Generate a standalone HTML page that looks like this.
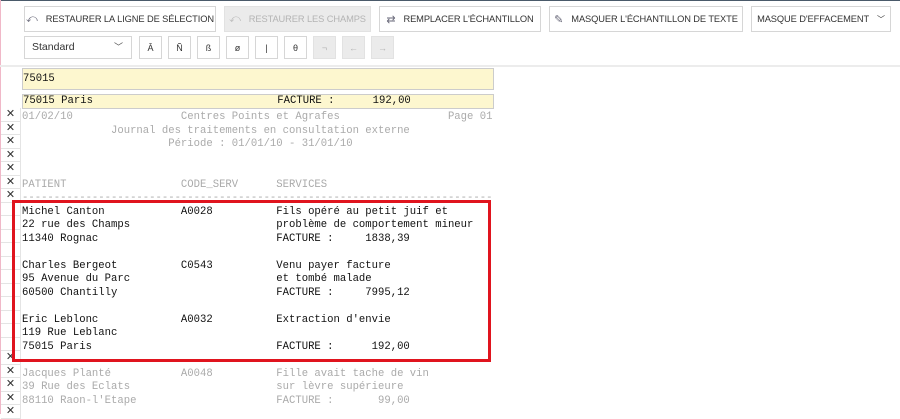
<!DOCTYPE html>
<html><head><meta charset="utf-8"><style>
*{box-sizing:border-box;margin:0;padding:0}
body{width:900px;height:414px;overflow:hidden;background:#fff;position:relative;font-family:"Liberation Sans",sans-serif}
.top{position:absolute;left:0;top:0;width:900px;height:1px;background:#4a5a6a}
.btn{position:absolute;top:6px;height:26px;border:1px solid #d6d6d6;background:#fff;font-size:9.3px;color:#333;display:flex;align-items:center;justify-content:center;gap:8px;letter-spacing:-0.1px}
.btn.dis{background:#ebebeb;color:#b4b4b4;border-color:#e2e2e2}
.ic{font-size:11px;color:#667}
.sb{position:absolute;top:36px;width:23px;height:23px;border:1px solid #d6d6d6;background:#fff;font-size:9px;color:#333;display:flex;align-items:center;justify-content:center}
.sb.dis{background:#ebebeb;color:#b4b4b4;border-color:#e2e2e2}
.sel{position:absolute;left:24px;top:36px;width:108px;height:23px;border:1px solid #d6d6d6;font-size:10.5px;color:#333;padding-left:7px;line-height:21px}
.sep{position:absolute;left:0;top:65px;width:900px;height:2px;background:#ececec}
.pink{position:absolute;left:0;top:0;width:1px;height:414px;background:#f0b8c8}
.gut{position:absolute;left:1px;width:20px;height:13.5px;border-bottom:1px solid #e4e4e4;border-right:1px solid #e4e4e4;font-size:11px;color:#333;text-align:center;line-height:13px}
.yb{position:absolute;left:22px;width:472px;background:#fdf7cf;border:1px solid #ccc;font-family:"Liberation Mono",monospace;font-size:10.6px;color:#111;padding-left:0;white-space:pre}
.ln{position:absolute;left:22px;font-family:"Liberation Mono",monospace;font-size:10.6px;white-space:pre;line-height:13.5px;color:#111}
.g{color:#aaa}
.red{position:absolute;left:12px;top:200px;width:479px;height:162px;border:3px solid #e0141e}
</style></head><body>
<div class="top"></div>
<div class="pink"></div>
<div class="btn" style="left:24px;width:192px"><span class="ic">⤺</span>RESTAURER LA LIGNE DE SÉLECTION</div>
<div class="btn dis" style="left:224px;width:147px"><span class="ic" style="color:#bbb">⤺</span>RESTAURER LES CHAMPS</div>
<div class="btn" style="left:379px;width:162px"><span class="ic">⇄</span>REMPLACER L'ÉCHANTILLON</div>
<div class="btn" style="left:549px;width:194px"><span class="ic">✎</span>MASQUER L'ÉCHANTILLON DE TEXTE</div>
<div class="btn" style="left:751px;width:140px">MASQUE D'EFFACEMENT <span style="font-size:8px">﹀</span></div>
<div class="sel">Standard<span style="position:absolute;right:8px;top:0;font-size:9px;color:#555">﹀</span></div>
<div class="sb" style="left:139px">Â</div>
<div class="sb" style="left:168px">Ñ</div>
<div class="sb" style="left:197px">ß</div>
<div class="sb" style="left:226px">ø</div>
<div class="sb" style="left:255px">|</div>
<div class="sb" style="left:284px">θ</div>
<div class="sb dis" style="left:313px">¬</div>
<div class="sb dis" style="left:342px">←</div>
<div class="sb dis" style="left:371px">→</div>
<div class="sep"></div>
<div class="yb" style="top:68px;height:22px;line-height:20px">75015</div>
<div class="yb" style="top:94px;height:15px;line-height:13px">75015 Paris                             FACTURE :      192,00</div>
<div class="gut" style="top:108px">✕</div><div class="gut" style="top:121.5px">✕</div><div class="gut" style="top:135px">✕</div><div class="gut" style="top:148.5px">✕</div><div class="gut" style="top:162px">✕</div><div class="gut" style="top:175.5px">✕</div><div class="gut" style="top:189px">✕</div>
<div class="gut" style="top:202.5px"></div><div class="gut" style="top:216px"></div><div class="gut" style="top:229.5px"></div><div class="gut" style="top:243px"></div><div class="gut" style="top:256.5px"></div><div class="gut" style="top:270px"></div><div class="gut" style="top:283.5px"></div><div class="gut" style="top:297px"></div><div class="gut" style="top:310.5px"></div><div class="gut" style="top:324px"></div><div class="gut" style="top:337.5px"></div>
<div class="gut" style="top:351px">✕</div><div class="gut" style="top:364.5px">✕</div><div class="gut" style="top:378px">✕</div><div class="gut" style="top:391.5px">✕</div><div class="gut" style="top:405px">✕</div>
<div class="ln g" style="top:111px">01/02/10                 Centres Points et Agrafes                 Page 01
              Journal des traitements en consultation externe
                       Période : 01/01/10 - 31/01/10


PATIENT                  CODE_SERV      SERVICES
--------------------------------------------------------------------------</div>
<div class="ln" style="top:205.5px">Michel Canton            A0028          Fils opéré au petit juif et
22 rue des Champs                       problème de comportement mineur
11340 Rognac                            FACTURE :     1838,39

Charles Bergeot          C0543          Venu payer facture
95 Avenue du Parc                       et tombé malade
60500 Chantilly                         FACTURE :     7995,12

Eric Leblonc             A0032          Extraction d'envie
119 Rue Leblanc
75015 Paris                             FACTURE :      192,00</div>
<div class="ln g" style="top:367.5px">Jacques Planté           A0048          Fille avait tache de vin
39 Rue des Eclats                       sur lèvre supérieure
88110 Raon-l'Etape                      FACTURE :       99,00</div>
<div class="red"></div>
</body></html>
